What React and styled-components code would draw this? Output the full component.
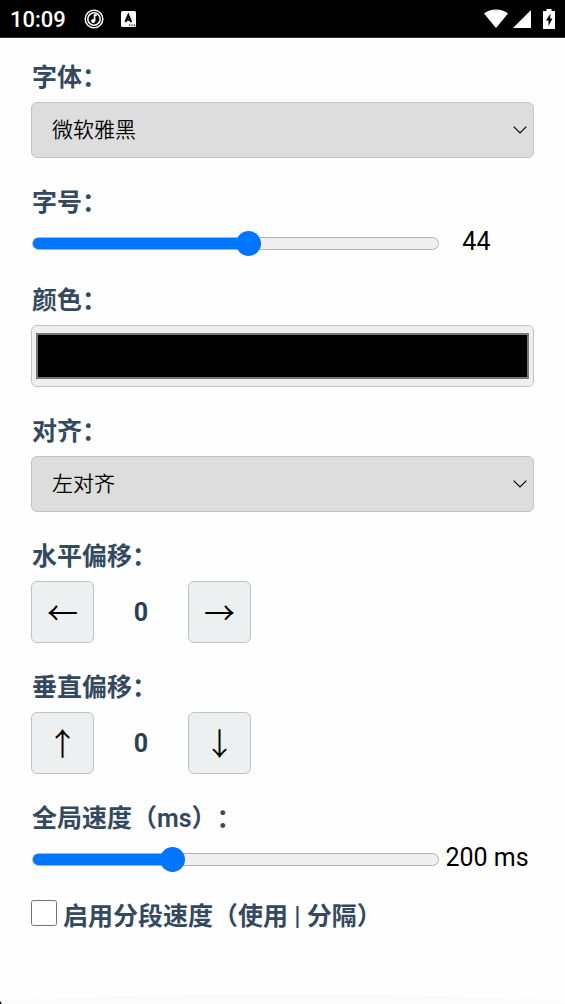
import React, { useState } from 'react';
import styled, { createGlobalStyle } from 'styled-components'

const GlobalStyle = createGlobalStyle`
  * {
    box-sizing: border-box;
  }
  body {
    margin: 0;
    background: #fefefe;
    color: #000;
    font-family: Roboto, "Noto Sans CJK SC", sans-serif;
    font-size: 25px;
    text-spacing-trim: space-all;
  }
`

const TuneIcon = () => (
  <svg width="20" height="20" viewBox="0 0 20 20" fill="none" stroke="#fff" aria-hidden="true">
    <circle cx="10" cy="10" r="8.8" strokeWidth="1.5" />
    <circle cx="10" cy="10" r="6.2" strokeWidth="1.5" />
    <path d="M10.600 12V6.200h2.200" strokeWidth="1.700" />
    <circle cx="9.200" cy="12" r="2.100" fill="#fff" stroke="none" />
  </svg>
);

const KeyboardIcon = () => (
  <svg width="16" height="18" viewBox="0 0 16 18" aria-hidden="true">
    <rect x="0" y="1" width="15" height="16" rx="1.500" fill="#fff" />
    <path d="M4.400 12 7.300 5l2.900 7M5.600 9.800h3.400" fill="none" stroke="#000" strokeWidth="2" />
    <path d="M8 15.200h1.200M10.400 15.200h1.200M12.800 15.200h1.200" stroke="#000" strokeWidth="1.200" />
  </svg>
);

const WifiIcon = () => (
  <svg width="24" height="20" viewBox="0 0 24 20" fill="#fff" aria-hidden="true">
    <path d="M12 19 0 4.500C3.400 2 7.500.6 12 .6S20.600 2 24 4.500z" />
  </svg>
);

const SignalIcon = () => (
  <svg width="18" height="18" viewBox="0 0 18 18" fill="#fff" aria-hidden="true">
    <path d="M18 0v18H0z" />
  </svg>
);

const BatteryIcon = () => (
  <svg width="12" height="20" viewBox="0 0 12 20" aria-hidden="true">
    <path d="M3.500 0h5v2H12v18H0V2h3.500z" fill="#fff" />
    <path d="M7.500 4.500 3 11.500h2.500v5.500L9.500 9.500H7z" fill="#000" />
  </svg>
);

const SliderField = ({ id, label, min, max, initial, unit }) => {
  const [value, setValue] = useState(initial);
  const ratio = (value - min) / (max - min);
  return (
    <Field>
      <Label htmlFor={id}>{label}</Label>
      <SliderRow>
        <Slider
          id={id}
          min={min}
          max={max}
          value={value}
          onChange={e => setValue(Number(e.target.value))}
          style={{ '--fill': `${ratio * 100}%` }}
        />
        <SliderValue>{value}{unit}</SliderValue>
      </SliderRow>
    </Field>
  );
};

const SelectField = ({ id, label, options }) => (
  <Field>
    <Label htmlFor={id}>{label}</Label>
    <SelectBox>
      <Select id={id}>
        {options.map(i => <option key={i}>{i}</option>)}
      </Select>
      <Chevron viewBox="0 0 14 8" aria-hidden="true">
        <path d="M.7.7 7 7 13.300.7" fill="none" stroke="#000" strokeWidth="1.200" />
      </Chevron>
    </SelectBox>
  </Field>
);

const OffsetField = ({ label, less, more }) => {
  const [value, setValue] = useState(0);
  return (
    <Field role="group" aria-label={label}>
      <Label as="div">{label}</Label>
      <OffsetRow>
        <ArrowButton type="button" onClick={() => setValue(value - 1)}>{less}</ArrowButton>
        <OffsetValue>{value}</OffsetValue>
        <ArrowButton type="button" onClick={() => setValue(value + 1)}>{more}</ArrowButton>
      </OffsetRow>
    </Field>
  );
};

const App = () => {
  const [color, setColor] = useState('#000000');
  return (
    <Page>
      <GlobalStyle />
      <StatusBar>
        <Clock>10:09</Clock>
        <StatusIcons $gap={17}>
          <TuneIcon />
          <KeyboardIcon />
        </StatusIcons>
        <StatusIcons $gap={5} $end>
          <WifiIcon />
          <SignalIcon />
          <BatterySlot><BatteryIcon /></BatterySlot>
        </StatusIcons>
      </StatusBar>
      <Settings>
        <SelectField id="font" label="字体：" options={['微软雅黑', '宋体', '黑体', '楷体']} />
        <SliderField id="size" label="字号：" min={12} max={72} initial={44} unit="" />
        <Field>
          <Label htmlFor="color">颜色：</Label>
          <ColorInput id="color" value={color} onChange={e => setColor(e.target.value)} />
        </Field>
        <SelectField id="align" label="对齐：" options={['左对齐', '居中', '右对齐']} />
        <OffsetField label="水平偏移：" less="←" more="→" />
        <OffsetField label="垂直偏移：" less="↑" more="↓" />
        <SliderField id="speed" label="全局速度（ms）：" min={50} max={500} initial={200} unit=" ms" />
        <CheckLabel>
          <Checkbox />
          启用分段速度（使用 | 分隔）
        </CheckLabel>
      </Settings>
      <BottomEdge viewBox="0 0 565 10" preserveAspectRatio="none" aria-hidden="true">
        <path d="M0 7Q130 0 283 0T565 7V10H0z" fill="#fbfbfb" />
        <path d="M0 7 2 10H0z" fill="#000" />
      </BottomEdge>
    </Page>
  );
};

const Page = styled.div`
  display: flex;
  flex-direction: column;
  min-height: 100vh;
`

const StatusBar = styled.header`
  display: flex;
  align-items: center;
  height: 38px;
  padding: 1px 10px 0;
  background: #000;
  border-bottom: 1px solid #333;
  color: #fff;
`

const Clock = styled.span`
  margin-right: 18px;
  font-size: 22px;
  font-weight: 500;
`

const StatusIcons = styled.div`
  display: flex;
  align-items: center;
  gap: ${props => props.$gap}px;
  ${props => props.$end ? `
    margin-left: auto;
  ` : false}
`

const BatterySlot = styled.span`
  display: flex;
  margin-left: 7px;
`

const Settings = styled.main`
  display: flex;
  flex-direction: column;
  gap: 25px;
  padding: 20px 31px;
`

const Field = styled.div`
  display: flex;
  flex-direction: column;
  gap: 4px;
`

const Label = styled.label`
  padding-left: 1px;
  color: #34495e;
  font-weight: 600;
  line-height: 40px;
`

const SelectBox = styled.div`
  position: relative;
`

const Select = styled.select`
  display: block;
  width: 100%;
  height: 56px;
  padding: 0 40px 0 20px;
  appearance: none;
  background: #ddd;
  border: 1px solid #bdc3c7;
  border-radius: 6px;
  color: #000;
  font-family: inherit;
  font-size: 21px;
  font-weight: 350;
`

const Chevron = styled.svg`
  position: absolute;
  top: 24px;
  right: 7px;
  width: 14px;
  height: 8px;
  pointer-events: none;
`

const SliderRow = styled.div`
  display: flex;
  align-items: center;
  height: 29px;
`

const Slider = styled.input.attrs({ type: 'range' })`
  width: 81%;
  height: 25px;
  margin: 4px 0 0 1px;
  appearance: none;
  background: none;

  &::-webkit-slider-runnable-track {
    height: 13px;
    border: 1px solid #b2b2b2;
    border-radius: 7px;
    background: linear-gradient(to right, #0075ff var(--fill), #efefef var(--fill));
  }

  &::-webkit-slider-thumb {
    width: 25px;
    height: 25px;
    margin-top: -7px;
    appearance: none;
    border-radius: 50%;
    background: #0075ff;
  }
`

const SliderValue = styled.span`
  width: 62px;
  margin-left: 6px;
  text-align: center;
  white-space: nowrap;
`

const ColorInput = styled.input.attrs({ type: 'color' })`
  width: 100%;
  height: 62px;
  padding: 7px 4px;
  background: #efefef;
  border: 1px solid #bdc3c7;
  border-radius: 6px;

  &::-webkit-color-swatch-wrapper {
    padding: 0;
  }

  &::-webkit-color-swatch {
    border: 2px solid #777;
  }
`

const OffsetRow = styled.div`
  display: flex;
  align-items: center;
`

const ArrowButton = styled.button`
  width: 63px;
  height: 62px;
  padding: 0 0 3px;
  background: #ecf0f1;
  border: 1px solid #bdc3c7;
  border-radius: 6px;
  color: #000;
  font-family: "Noto Sans CJK SC", sans-serif;
  font-size: 31px;
  font-weight: 350;
  line-height: 1;
`

const OffsetValue = styled.span`
  width: 94px;
  color: #2c3e50;
  font-weight: 700;
  text-align: center;
`

const CheckLabel = styled(Label)`
  display: flex;
  align-items: center;
  gap: 6px;
  padding-left: 0;
`

const Checkbox = styled.input.attrs({ type: 'checkbox' })`
  width: 26px;
  height: 26px;
  margin: 0 0 8px;
`

const BottomEdge = styled.svg`
  display: block;
  width: 100%;
  height: 10px;
  margin-top: auto;
`

export default App;
